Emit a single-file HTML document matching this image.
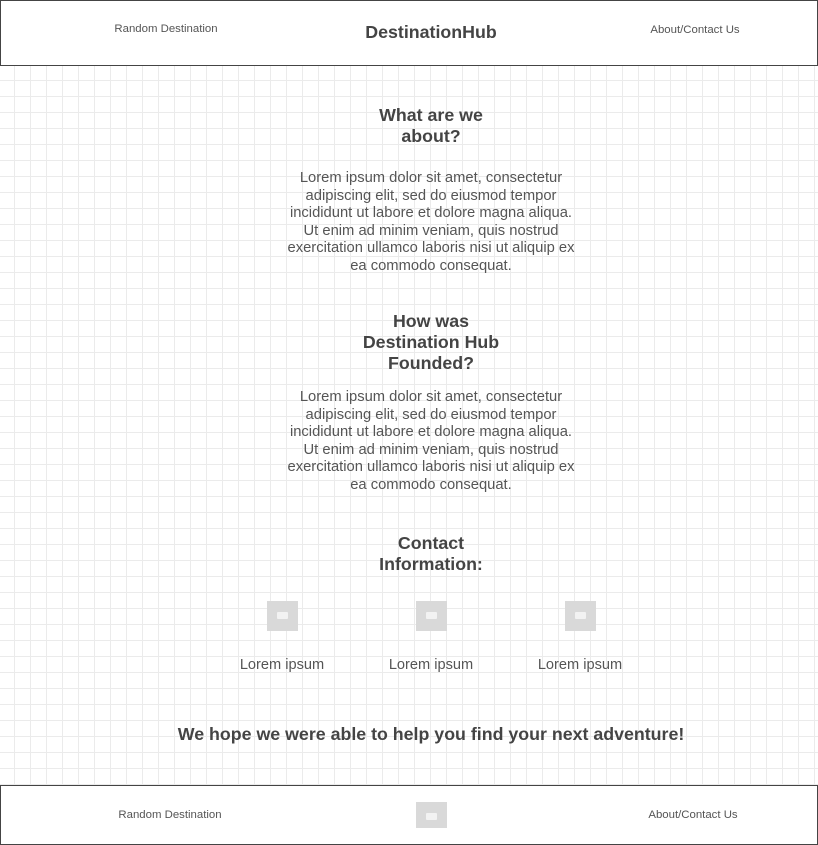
<!DOCTYPE html>
<html><head><meta charset="utf-8"><style>
*{margin:0;padding:0;box-sizing:border-box}
html,body{width:818px;height:845px;overflow:hidden}
body{font-family:"Liberation Sans",Arial,sans-serif;color:#555;position:relative;background:#fff;
background-image:linear-gradient(to right,#ebebeb 1px,transparent 1px),linear-gradient(to bottom,#ebebeb 1px,transparent 1px);
background-size:16px 16px;background-position:14px 0}
.bar{position:absolute;left:0;width:818px;background:#fff;border:1.5px solid #444}
.a{position:absolute;font-size:11.4px;color:#555;transform:translateX(-50%);white-space:nowrap}
.c{position:absolute;left:431px;transform:translateX(-50%);text-align:center;white-space:nowrap}
h2{font-size:17.8px;font-weight:bold;color:#444;line-height:21px}
p{font-size:14.75px;line-height:17.5px;color:#555}
.img{position:absolute;width:31px;height:30px;background:#d9d9d9}
.img:after{content:"";position:absolute;left:10px;top:11px;width:11px;height:7px;background:#f2f2f2;border-radius:1px}
.l{position:absolute;font-size:14.6px;transform:translateX(-50%);white-space:nowrap}
</style></head><body>
<div class="bar" style="top:0;height:66px"></div>
<div class="a" style="left:166px;top:23px">Random Destination</div>
<div class="c" style="top:22px;font-size:17.8px;font-weight:bold;color:#444">DestinationHub</div>
<div class="a" style="left:695px;top:24px">About/Contact Us</div>

<div class="c" style="top:105px"><h2>What are we<br>about?</h2></div>
<div class="c" style="top:170px"><p>Lorem ipsum dolor sit amet, consectetur<br>adipiscing elit, sed do eiusmod tempor<br>incididunt ut labore et dolore magna aliqua.<br>Ut enim ad minim veniam, quis nostrud<br>exercitation ullamco laboris nisi ut aliquip ex<br>ea commodo consequat.</p></div>

<div class="c" style="top:311px"><h2>How was<br>Destination Hub<br>Founded?</h2></div>
<div class="c" style="top:389px"><p>Lorem ipsum dolor sit amet, consectetur<br>adipiscing elit, sed do eiusmod tempor<br>incididunt ut labore et dolore magna aliqua.<br>Ut enim ad minim veniam, quis nostrud<br>exercitation ullamco laboris nisi ut aliquip ex<br>ea commodo consequat.</p></div>

<div class="c" style="top:533px"><h2>Contact<br>Information:</h2></div>

<div class="img" style="left:267px;top:601px"></div>
<div class="img" style="left:416px;top:601px"></div>
<div class="img" style="left:565px;top:601px"></div>
<div class="l" style="left:282px;top:657px">Lorem ipsum</div>
<div class="l" style="left:431px;top:657px">Lorem ipsum</div>
<div class="l" style="left:580px;top:657px">Lorem ipsum</div>

<div class="c" style="top:724px;font-size:17.8px;font-weight:bold;color:#444">We hope we were able to help you find your next adventure!</div>

<div class="bar" style="top:785px;height:60px"></div>
<div class="a" style="left:170px;top:809px">Random Destination</div>
<div class="img" style="left:416px;top:802px;height:26px"></div>
<div class="a" style="left:693px;top:809px">About/Contact Us</div>
</body></html>
